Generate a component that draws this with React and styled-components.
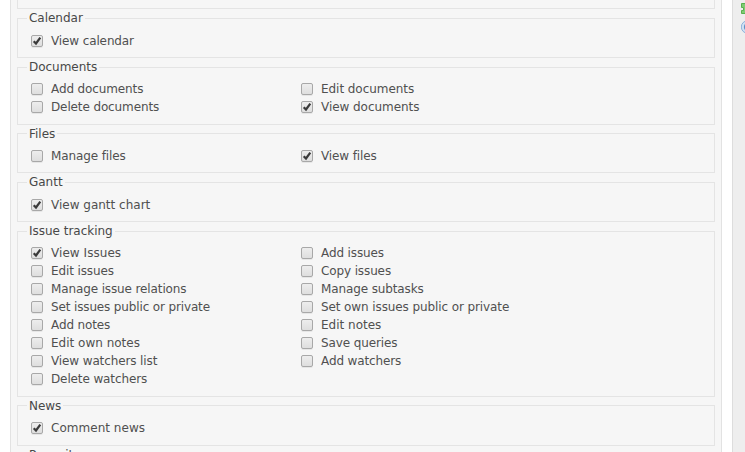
import React from 'react';
import styled, { createGlobalStyle } from 'styled-components';

const GlobalStyle = createGlobalStyle`
  * { box-sizing: border-box; }
  body { margin: 0; background: #fff; overflow: hidden; font-family: "DejaVu Sans", Verdana, sans-serif; font-size: 12px; color: #505050; }
`;

const Page = styled.div`
  display: flex;
  width: 745px;
  height: 452px;
  overflow: hidden;
`;

const Panel = styled.main`
  flex: none;
  width: 712px;
  margin-left: 10px;
  padding: 0 6px;
  border: solid #e2e2e2;
  border-width: 0 1px;
  background: #f6f6f6;
`;

const Sidebar = styled.aside`
  flex: 1;
  min-width: 0;
  overflow: hidden;
  margin-left: 10px;
  padding: 2px 0 0 8px;
  border-left: 1px solid #ddd;
  background: #eee;
  display: flex;
  flex-direction: column;
  gap: 2px;
  svg { display: block; flex: none; }
`;

const PreviousGroup = styled.div`
  height: 9px;
  border: 1px solid #e4e4e4;
  border-top: 0;
`;

const Group = styled.section`
  height: ${p => p.$height}px;
  margin-top: ${p => p.$gap}px;
  padding: 0 13px;
  border: 1px solid #e4e4e4;
`;

const Legend = styled.h3`
  width: max-content;
  height: 16px;
  margin: ${p => (p.$low ? -8 : -9)}px 0 0 -4px;
  padding: 0 2px;
  background: #f6f6f6;
  color: #484848;
  font-size: 12px;
  font-weight: 400;
  line-height: 16px;
  white-space: nowrap;
  letter-spacing: -0.02px;
`;

const Options = styled.div`
  display: grid;
  grid-template-columns: 270px 1fr;
  grid-auto-rows: 18px;
  margin-top: ${p => p.$top}px;
`;

const Option = styled.label`
  display: flex;
  align-items: center;
  gap: 8px;
  line-height: 18px;
  white-space: nowrap;
  letter-spacing: ${p => p.$spacing}px;
`;

const Box = styled.span`
  width: 12px;
  height: 12px;
  flex: none;
  border: 1px solid #a8a8a8;
  border-radius: 2px;
  background: linear-gradient(#ededed, #dedede);
  box-shadow: 0 1px 0 #e6e6e6;
  svg { display: block; }
`;

const groups = [
  { title: 'Calendar', gap: 9, height: 40, top: 6, items: ['*View calendar'] },
  { title: 'Documents', gap: 9, height: 58, top: 5, items: ['Add documents', 'Edit documents', 'Delete documents', '*View documents'] },
  { title: 'Files', gap: 8, height: 40, top: 5, low: true, items: ['Manage files', '*View files'] },
  { title: 'Gantt', gap: 9, height: 40, top: 6, items: ['*View gantt chart'] },
  { title: 'Issue tracking', gap: 9, height: 166, top: 5, items: ['*View Issues', 'Add issues', 'Edit issues', 'Copy issues', 'Manage issue relations', 'Manage subtasks', 'Set issues public or private', 'Set own issues public or private', 'Add notes', 'Edit notes', 'Edit own notes', 'Save queries', 'View watchers list', 'Add watchers', 'Delete watchers'] },
  { title: 'News', gap: 8, height: 41, top: 5, low: true, items: ['*Comment news'] },
  { title: 'Repository', gap: 9, height: 60, top: 6, items: [] },
];

const tracking = {
  'View gantt chart': 0,
  'Comment news': 0.03,
  'View Issues': 0.05,
  'Edit own notes': 0,
  'Edit notes': 0,
  'Edit documents': -0.05,
  'View documents': -0.05,
  'Set own issues public or private': -0.1,
  'Set issues public or private': -0.14,
};

function Checkbox({ checked }) {
  return (
    <Box>
      {checked && (
        <svg width="10" height="10" viewBox="0 0 10 10">
          <path d="M1.7 5.2 4 7.5 8.3 1.7" fill="none" stroke="#3a3a3a" strokeWidth="2.2" />
        </svg>
      )}
    </Box>
  );
}

export default function App() {
  return (
    <Page>
      <GlobalStyle />
      <Panel>
        <PreviousGroup />
        {groups.map(g => (
          <Group key={g.title} $gap={g.gap} $height={g.height}>
            <Legend $low={g.low}>{g.title}</Legend>
            <Options $top={g.top}>
              {g.items.map(item => {
                const label = item.replace('*', '');
                return (
                  <Option key={label} $spacing={tracking[label] ?? -0.12}>
                    <Checkbox checked={item[0] === '*'} />
                    <span>{label}</span>
                  </Option>
                );
              })}
            </Options>
          </Group>
        ))}
      </Panel>
      <Sidebar>
        <svg width="16" height="16" viewBox="0 0 16 16">
          <path d="M.5 1.5h4v2h2v-2h8v10H.5v-3h2v-3h-2z" fill="#7fcb73" stroke="#58b04e" />
        </svg>
        <svg width="16" height="16" viewBox="0 0 16 16">
          <circle cx="6.5" cy="7" r="6.2" fill="#cfe1f4" stroke="#8fb2da" />
          <circle cx="6.5" cy="7" r="3.6" fill="#5f8fc4" />
        </svg>
      </Sidebar>
    </Page>
  );
}
